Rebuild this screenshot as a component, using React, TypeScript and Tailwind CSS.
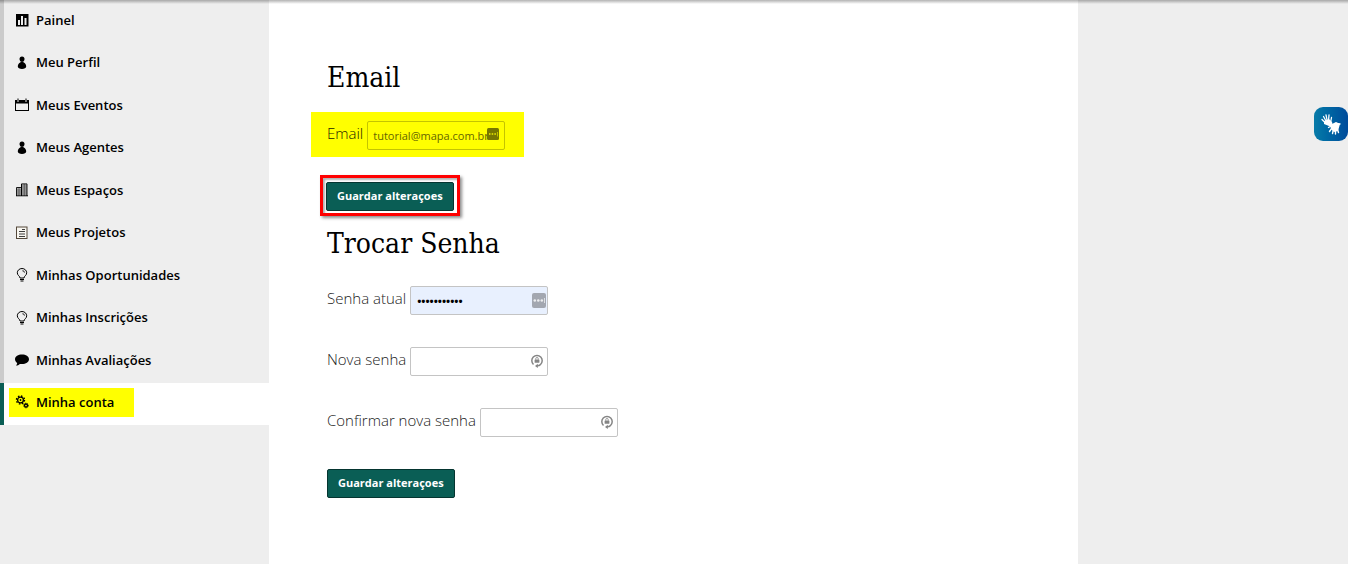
import React from "react";

const Svg = ({ children, box = "0 0 14 14" }: { children: React.ReactNode; box?: string }) => (
  <svg viewBox={box} className="size-3.5 shrink-0" aria-hidden="true" fill="currentColor">
    {children}
  </svg>
);

const Chart = () => (
  <Svg>
    <path fillRule="evenodd" d="M1 1h12.500v12.500H1zM3 7h2v5H3zM6 3h2v9H6zM9.500 5h2v7h-2z" />
  </Svg>
);

const Person = () => (
  <Svg>
    <circle cx="7" cy="3" r="2.500" />
    <path d="M5.600 5.200h2.800v1C10.300 7 11.200 8.800 11.200 10.600c0 1.600-1.800 2.400-4.200 2.400s-4.200-.8-4.200-2.400c0-1.800.9-3.600 2.800-4.400z" />
  </Svg>
);

const Calendar = () => (
  <Svg>
    <path fillRule="evenodd" d="M0 2h2v1.500h2V2h6v1.500h2V2h2v11H0zM1 5.500v6.500h12V5.500z" />
    <path d="M2.500.5h1V3h-1zM10.500.5h1V3h-1z" />
  </Svg>
);

const Building = () => (
  <Svg>
    <path fill="#b0b0b0" d="M2 5h5v8H2zM7 1h5v12H7z" />
    <path
      fill="none"
      stroke="currentColor"
      d="M6.500 13V.9h5.500V13M6.500 4.500h-5V13M1 12.800h12M6.500 1v12"
      strokeWidth=".9"
    />
    <path
      fill="none"
      stroke="currentColor"
      opacity=".6"
      d="M4 4.500V13M9.300 1v12M2 7h10M2 9h10M2 11h10M7 3h5M7 5h5"
      strokeWidth=".6"
    />
  </Svg>
);

const Paper = () => (
  <Svg>
    <rect x="1.500" y="1" width="10.500" height="11.500" fill="#f8f6f0" stroke="#54483a" />
    <path d="M7 3.500h3M4 5.500h6M4 8h6M4 10.500h6" stroke="currentColor" strokeWidth="1" opacity=".75" />
  </Svg>
);

const Bulb = () => (
  <Svg>
    <path
      fill="none"
      stroke="currentColor"
      strokeWidth="1"
      d="M5 10c0-2-2.700-2.500-2.700-5.200a4.700 4.300 0 0 1 9.400 0C11.700 7.500 9 8 9 10zM5 11.500h4M5.500 13h3M7.500 2.800c1.200 0 1.900.7 1.900 1.700"
    />
  </Svg>
);

const Comment = () => (
  <Svg>
    <path d="M7 1.500c3.800 0 7 2 7 4.800s-3.200 4.800-7 4.800c-.8 0-1.500-.1-2.200-.2C3.800 11.800 2.500 12.500 1 12.500c.8-.8 1.200-1.700 1.200-2.500C.8 9.100 0 7.800 0 6.300 0 3.500 3.200 1.500 7 1.500z" />
  </Svg>
);

const Gears = () => (
  <Svg>
    <circle cx="5.500" cy="5" r="2.900" fill="none" stroke="currentColor" strokeWidth="1.300" />
    <circle cx="5.500" cy="5" r="4" fill="none" stroke="currentColor" strokeWidth="1.400" strokeDasharray="1.570 1.570" />
    <circle cx="5.500" cy="5" r=".9" />
    <circle cx="11" cy="10.500" r="1.500" fill="none" stroke="currentColor" strokeWidth="1.300" />
    <circle cx="11" cy="10.500" r="2.300" fill="none" stroke="currentColor" strokeDasharray="1 .8" />
  </Svg>
);

const items = [
  { label: "Painel", Icon: Chart },
  { label: "Meu Perfil", Icon: Person },
  { label: "Meus Eventos", Icon: Calendar },
  { label: "Meus Agentes", Icon: Person },
  { label: "Meus Espaços", Icon: Building },
  { label: "Meus Projetos", Icon: Paper },
  { label: "Minhas Oportunidades", Icon: Bulb },
  { label: "Minhas Inscrições", Icon: Bulb },
  { label: "Minhas Avaliações", Icon: Comment },
  { label: "Minha conta", Icon: Gears, active: true },
];

const Dots = ({ className }: { className: string }) => (
  <svg viewBox="0 0 14 15" className={className} aria-hidden="true">
    <rect width="14" height="15" rx="2" fill="currentColor" />
    <g fill="white" className="opacity-80">
      <circle cx="2.800" cy="7.500" r="1.300" />
      <circle cx="6.300" cy="7.500" r="1.300" />
      <circle cx="9.800" cy="7.500" r="1.300" />
      <path d="M12 5h.8v5H12z" />
    </g>
  </svg>
);

const LockCircle = () => (
  <svg viewBox="0 0 14 16" className="absolute right-1 top-1.5 h-4 w-3.5 text-[#858585]" aria-hidden="true">
    <path
      d="M3.500 11.500A5.200 5.200 0 1 1 10.500 11.500Q9.500 12.800 7 12.800"
      fill="none"
      stroke="currentColor"
      strokeWidth="1.500"
    />
    <path d="M7.800 10.800v4.200L5 13z" fill="currentColor" />
    <rect x="4.600" y="6.400" width="4.800" height="3.400" rx=".5" fill="currentColor" />
    <path d="M5.700 6.600V5.800a1.300 1.300 0 0 1 2.600 0v.8" fill="none" stroke="currentColor" strokeWidth=".8" />
  </svg>
);

const Heading = ({ children }: { children: React.ReactNode }) => (
  <h2 className="font-['DejaVu_Serif_Condensed','DejaVu_Serif',serif] text-[28px] leading-8 text-black">{children}</h2>
);

const SaveButton = () => (
  <button
    type="submit"
    className="h-[29px] rounded-xs border border-[#053530] bg-[#0a5e55] px-2.5 text-[11px] font-bold text-white"
  >
    Guardar alteraçoes
  </button>
);

const PasswordRow = ({
  id,
  label,
  value = "",
  filled = false,
}: {
  id: string;
  label: string;
  value?: string;
  filled?: boolean;
}) => (
  <div className="flex items-center gap-1">
    <label htmlFor={id} className="pb-1">
      {label}
    </label>
    <div className="relative">
      <input
        id={id}
        type="password"
        defaultValue={value}
        className={
          filled
            ? "block h-[29px] w-[138px] rounded-xs border border-[#c4c4c4] bg-[#e8f0fe] px-1.5 text-[11px] font-bold text-black outline-none"
            : "block h-[29px] w-[138px] rounded-xs border border-[#c4c4c4] bg-white px-1.5 text-[11px] font-bold text-black outline-none"
        }
      />
      {filled ? <Dots className="absolute right-0.5 top-[7px] h-[15px] w-3.5 text-[#a3a7b0]" /> : <LockCircle />}
    </div>
  </div>
);

export default function App() {
  return (
    <div className="relative flex min-h-screen bg-[#eeeeee] font-['Open_Sans',sans-serif]">
      <div className="pointer-events-none absolute inset-x-0 top-0 z-10 h-1 bg-linear-to-b from-black/30 to-transparent" />
      <nav className="w-[269px] shrink-0">
        <ul className="grid h-[425px] auto-rows-fr">
          {items.map(({ label, Icon, active }) => (
            <li
              key={label}
              className={active ? "flex border-l-4 border-[#0a5e55] bg-white" : "flex border-l-4 border-[#cbcbcb]"}
            >
              <a
                href="#"
                className={
                  active
                    ? "mb-2 ml-[5px] mt-[5px] flex w-[125px] items-center gap-[7px] bg-[#ffff00] pl-1.5 text-[13px] font-semibold text-black"
                    : "flex flex-1 items-center gap-[7px] pb-0.5 pl-[11px] text-[13px] font-semibold text-black"
                }
              >
                <Icon />
                <span>{label}</span>
              </a>
            </li>
          ))}
        </ul>
      </nav>

      <main className="w-3/5 bg-white pb-16 pl-[58px] pt-[62px] text-[15px] font-light text-[#222]">
        <form onSubmit={(e) => e.preventDefault()} className="flex flex-col items-start">
          <Heading>Email</Heading>
          <div className="-ml-4 mt-[18px] flex h-[45px] w-[213px] items-center gap-1 bg-[#ffff00] pl-4 pt-0.5 text-[#222200]">
            <label htmlFor="email" className="pb-1">
              Email
            </label>
            <div className="relative">
              <input
                id="email"
                type="text"
                defaultValue="tutorial@mapa.com.br"
                className="block h-[29px] w-[138px] rounded-xs border border-[#c4c400] bg-transparent pl-[5px] text-[11px] font-normal text-[#666600] outline-none"
              />
              <svg viewBox="0 0 12 12" className="absolute right-1.5 top-[7px] size-3" aria-hidden="true">
                <rect width="12" height="12" rx="1.500" fill="#777700" />
                <path d="M2 5h1.500v2H2zM4.700 5h1.500v2H4.700zM7.400 5h1.500v2H7.400zM10 4h.8v4.500H10z" fill="#d0d000" />
              </svg>
            </div>
          </div>
          <div className="-ml-[7px] mt-[18px] flex border-3 border-[#ff0000] px-[3px] pb-0.5 pt-1 shadow-[2px_2px_3px_rgba(0,0,0,0.45),inset_2px_2px_2px_rgba(0,0,0,0.3)]">
            <SaveButton />
          </div>
        </form>

        <form onSubmit={(e) => e.preventDefault()} className="mt-3 flex flex-col items-start">
          <Heading>Trocar Senha</Heading>
          <div className="mt-[26px] flex flex-col items-start gap-8">
            <PasswordRow id="current" label="Senha atual" value="tutorial123" filled />
            <PasswordRow id="new" label="Nova senha" />
            <PasswordRow id="confirm" label="Confirmar nova senha" />
            <SaveButton />
          </div>
        </form>
      </main>

      <button
        type="button"
        aria-label="Libras"
        className="fixed right-0 top-[107px] flex size-[34px] items-center justify-center rounded-[9px] bg-linear-to-r from-[#087ba8] to-[#004b9b] text-white"
      >
        <svg viewBox="0 0 34 34" className="size-[34px]" aria-hidden="true" fill="currentColor" stroke="currentColor" strokeLinecap="round">
          <path stroke="none" d="M10 14l5-2 3 3 1 4-4 0-5-2z" />
          <path d="M12 14L9.500 9.500M13 13L12 7.800M14.500 13.500L15 8M11 15.500L8 12.500M16.500 16L17.500 10.500" strokeWidth="1.300" />
          <path stroke="none" d="M16 18l6-3 4 2-2 7-4 1-3-3z" />
          <path d="M18 21L15.500 24.500M19.500 22L18.500 26.500M21.500 22L21.500 27M23 21L24.500 25.500M18 18.500L14.500 20.500M22 16.500L26 17" strokeWidth="1.400" />
        </svg>
      </button>
    </div>
  );
}
